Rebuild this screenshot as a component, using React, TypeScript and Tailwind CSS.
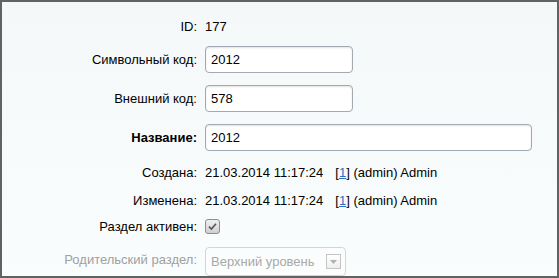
import React from 'react';

function Row({ label, h, bold, muted, top, children }: { label: string; h: string; bold?: boolean; muted?: boolean; top?: boolean; children: React.ReactNode }) {
  return (
    <div className={`grid grid-cols-[195px_1fr] gap-x-[8px] ${h} ${top ? 'items-start' : 'items-center'}`}>
      <div
        className={`text-right ${bold ? 'font-bold' : ''} ${muted ? 'text-[#a0a0a0]' : 'text-black'} ${top ? 'pt-[13px]' : ''}`}
      >
        {label}
      </div>
      <div className={top ? 'pt-[7px]' : ''}>{children}</div>
    </div>
  );
}

function TextInput({ value, width }: { value: string; width: string }) {
  return (
    <input
      type="text"
      defaultValue={value}
      className={`${width} h-[27px] rounded-[4px] border border-[#a3a9b0] bg-white px-[5px] text-[13px] text-black shadow-[inset_0_1px_2px_rgba(0,0,0,0.12)] outline-none`}
      style={{ fontFamily: '"Liberation Sans", Arial, sans-serif' }}
    />
  );
}

function Author() {
  return (
    <span className="ml-[12px]">
      [<a href="#" className="text-[#2b6bc2] underline">1</a>] (admin) Admin
    </span>
  );
}

export default function App() {
  return (
    <div
      className="w-[559px] h-[278px] overflow-hidden border-2 border-[#626262] bg-gradient-to-b from-[#f4f8f9] to-[#fafdfd] text-[13px] leading-none"
      style={{ fontFamily: '"Liberation Sans", Arial, sans-serif' }}
    >
      <div className="pt-[10px]">
        <Row label="ID:" h="h-[28px]">
          177
        </Row>
        <Row label="Символьный код:" h="h-[38px]">
          <TextInput value="2012" width="w-[148px]" />
        </Row>
        <Row label="Внешний код:" h="h-[40px]">
          <TextInput value="578" width="w-[148px]" />
        </Row>
        <Row label="Название:" h="h-[38px]" bold>
          <TextInput value="2012" width="w-[327px]" />
        </Row>
        <Row label="Создана:" h="h-[32px]">
          <span>
            21.03.2014 11:17:24
            <Author />
          </span>
        </Row>
        <Row label="Изменена:" h="h-[24px]">
          <span>
            21.03.2014 11:17:24
            <Author />
          </span>
        </Row>
        <Row label="Раздел активен:" h="h-[28px]">
          <span className="flex h-[15px] w-[15px] items-center justify-center rounded-[3px] border border-[#8d8d8d] bg-gradient-to-b from-[#f0f0f0] to-[#cfcfcf]">
            <svg width="11" height="11" viewBox="0 0 11 11">
              <path d="M2 5.6 L4.4 8 L9 2.8" fill="none" stroke="#555" strokeWidth="1.6" />
            </svg>
          </span>
        </Row>
        <Row label="Родительский раздел:" h="h-[44px]" muted top>
          <div className="flex h-[29px] w-[141px] items-center justify-between rounded-[4px] border border-[#d3d6d9] bg-white/40 pl-[5px] pr-[4px] text-[#a8a8a8]">
            <span>Верхний уровень</span>
            <span className="flex h-[15px] w-[15px] items-center justify-center border border-[#c4c4c4] bg-gradient-to-b from-white to-[#eeeeee]">
              <svg width="7" height="4" viewBox="0 0 7 4">
                <path d="M0 0 H7 L3.5 4 Z" fill="#b0b0b0" />
              </svg>
            </span>
          </div>
        </Row>
      </div>
    </div>
  );
}
